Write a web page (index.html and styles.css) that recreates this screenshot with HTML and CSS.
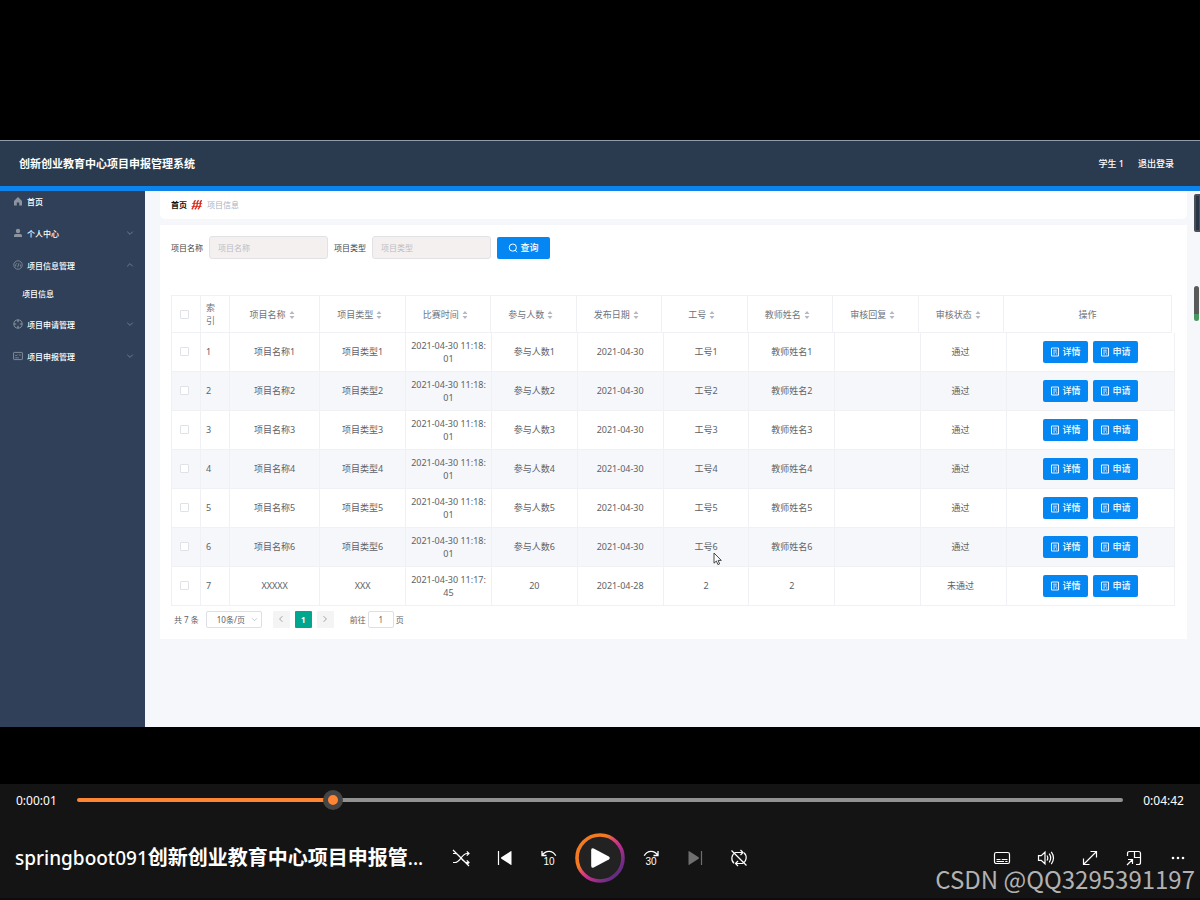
FILE: index.html
```
<!DOCTYPE html>
<html lang="zh-CN">
<head>
<meta charset="utf-8">
<meta name="viewport" content="width=device-width, initial-scale=1">
<title>springboot091创新创业教育中心项目申报管理系统</title>
<link rel="stylesheet" href="styles.css">
</head>
<body>
<svg class="sprite" aria-hidden="true">
  <symbol id="sort" viewBox="0 0 6 10"><path d="M0.5 4L3 1l2.5 3zM0.5 6L3 9l2.5-3z" fill="#b4b8c0"/></symbol>
  <symbol id="doc" viewBox="0 0 10 10"><path d="M1.500 1h7v8h-7z" fill="none" stroke="#fff" stroke-width=".9"/><path d="M3.200 3.200h3.600M3.200 5h3.600M3.200 6.900h1.800M6 6.900h1.200" stroke="#fff" stroke-width=".8"/></symbol>
  <symbol id="down" viewBox="0 0 8 8"><path d="M1.2 2.6L4 5.4l2.8-2.8" fill="none" stroke="currentColor" stroke-width=".9"/></symbol>
</svg>

<div class="stage">
  <div class="app">
    <header class="topbar">
      <h1 class="brand">创新创业教育中心项目申报管理系统</h1>
      <div class="account"><span>学生 1</span><a href="#">退出登录</a></div>
    </header>
    <div class="workspace">
      <nav class="sidebar">
        <a class="nav-item nav-home" href="#"><svg class="nav-icon" viewBox="0 0 10 10"><path d="M5 1L1 5v4.5h2.8V6.4h2.4v3.1H9V5z" fill="#8b949f"/></svg><span>首页</span></a>
        <a class="nav-item" href="#"><svg class="nav-icon" viewBox="0 0 10 10"><circle cx="5" cy="3" r="2.2" fill="#8b949f"/><path d="M1 9V7.6Q1 6 2.6 6h4.8Q9 6 9 7.6V9z" fill="#8b949f"/></svg><span>个人中心</span><svg class="chevron"><use href="#down"/></svg></a>
        <a class="nav-item" href="#"><svg class="nav-icon" viewBox="0 0 10 10"><circle cx="5" cy="5" r="4.2" fill="none" stroke="#8b949f" stroke-width=".8"/><path d="M2.600 6.500Q2.400 4 4 3.200M4.700 7.200l1.300-4M7.400 4.500v2" fill="none" stroke="#8b949f" stroke-width=".8"/></svg><span>项目信息管理</span><svg class="chevron chevron-up"><use href="#down"/></svg></a>
        <a class="nav-sub" href="#">项目信息</a>
        <a class="nav-item" href="#"><svg class="nav-icon" viewBox="0 0 10 10"><circle cx="5" cy="5" r="4.1" fill="none" stroke="#8b949f" stroke-width=".9"/><path d="M5 .5v2.8M5 6.7v2.8M.5 5h2.8M6.7 5h2.8" stroke="#8b949f" stroke-width="1.2"/></svg><span>项目申请管理</span><svg class="chevron"><use href="#down"/></svg></a>
        <a class="nav-item" href="#"><svg class="nav-icon" viewBox="0 0 10 10"><rect x=".6" y="1.4" width="8.8" height="7.2" rx=".6" fill="none" stroke="#8b949f" stroke-width=".9"/><path d="M2.2 4l1 1 1.500-1.500M5.800 4h2M2.200 6.800h3.600" fill="none" stroke="#8b949f" stroke-width=".8"/></svg><span>项目申报管理</span><svg class="chevron"><use href="#down"/></svg></a>
      </nav>
      <main class="content">
        <div class="crumbs">
          <a href="#">首页</a>
          <svg class="crumb-mark" viewBox="0 0 12 10"><path d="M4.800.6Q2.900.8 3.100 3T2.500 6.600.8 9.400M7.900.6Q6 .8 6.200 3T5.600 6.600 3.900 9.400M11 .6Q9.100.8 9.300 3T8.700 6.600 7 9.400" fill="none" stroke="#d8281b" stroke-width="1.300"/><path d="M1.200 3.400h10M.6 6.400h10" stroke="#d8281b" stroke-width=".9"/></svg>
          <span>项目信息</span>
        </div>
        <section class="card">
          <form class="filters">
            <label for="name">项目名称</label>
            <input id="name" type="text" placeholder="项目名称">
            <label for="type">项目类型</label>
            <input id="type" type="text" placeholder="项目类型">
            <button class="btn btn-search" type="button"><svg class="btn-icon" viewBox="0 0 10 10"><circle cx="4.8" cy="4.6" r="3.6" fill="none" stroke="#fff"/><path d="M7.2 7.2l1.8 2" stroke="#fff"/></svg>查询</button>
          </form>

          <div class="grid-head">
            <table class="grid">
              <colgroup><col class="c-tick"><col class="c-tick"><col class="c-name"><col span="8" class="c-std"><col class="c-ops"></colgroup>
              <thead><tr>
                <th class="tick"><input type="checkbox" aria-label="全选"></th>
                <th class="idx">索引</th>
                <th>项目名称<svg class="sort"><use href="#sort"/></svg></th>
                <th>项目类型<svg class="sort"><use href="#sort"/></svg></th>
                <th>比赛时间<svg class="sort"><use href="#sort"/></svg></th>
                <th>参与人数<svg class="sort"><use href="#sort"/></svg></th>
                <th>发布日期<svg class="sort"><use href="#sort"/></svg></th>
                <th>工号<svg class="sort"><use href="#sort"/></svg></th>
                <th>教师姓名<svg class="sort"><use href="#sort"/></svg></th>
                <th>审核回复<svg class="sort"><use href="#sort"/></svg></th>
                <th>审核状态<svg class="sort"><use href="#sort"/></svg></th>
                <th>操作</th>
              </tr></thead>
            </table>
          </div>
          <table class="grid grid-body">
            <colgroup><col class="c-tick"><col class="c-tick"><col class="c-name"><col span="8" class="c-std"><col class="c-ops"></colgroup>
            <tbody>
              <tr><td class="tick"><input type="checkbox" aria-label="选择 1"></td><td class="idx">1</td><td>项目名称1</td><td>项目类型1</td><td>2021-04-30 11:18:<br>01</td><td>参与人数1</td><td>2021-04-30</td><td>工号1</td><td>教师姓名1</td><td></td><td class="state">通过</td><td><button class="btn" type="button"><svg class="btn-icon"><use href="#doc"/></svg>详情</button><button class="btn" type="button"><svg class="btn-icon"><use href="#doc"/></svg>申请</button></td></tr>
              <tr><td class="tick"><input type="checkbox" aria-label="选择 2"></td><td class="idx">2</td><td>项目名称2</td><td>项目类型2</td><td>2021-04-30 11:18:<br>01</td><td>参与人数2</td><td>2021-04-30</td><td>工号2</td><td>教师姓名2</td><td></td><td class="state">通过</td><td><button class="btn" type="button"><svg class="btn-icon"><use href="#doc"/></svg>详情</button><button class="btn" type="button"><svg class="btn-icon"><use href="#doc"/></svg>申请</button></td></tr>
              <tr><td class="tick"><input type="checkbox" aria-label="选择 3"></td><td class="idx">3</td><td>项目名称3</td><td>项目类型3</td><td>2021-04-30 11:18:<br>01</td><td>参与人数3</td><td>2021-04-30</td><td>工号3</td><td>教师姓名3</td><td></td><td class="state">通过</td><td><button class="btn" type="button"><svg class="btn-icon"><use href="#doc"/></svg>详情</button><button class="btn" type="button"><svg class="btn-icon"><use href="#doc"/></svg>申请</button></td></tr>
              <tr><td class="tick"><input type="checkbox" aria-label="选择 4"></td><td class="idx">4</td><td>项目名称4</td><td>项目类型4</td><td>2021-04-30 11:18:<br>01</td><td>参与人数4</td><td>2021-04-30</td><td>工号4</td><td>教师姓名4</td><td></td><td class="state">通过</td><td><button class="btn" type="button"><svg class="btn-icon"><use href="#doc"/></svg>详情</button><button class="btn" type="button"><svg class="btn-icon"><use href="#doc"/></svg>申请</button></td></tr>
              <tr><td class="tick"><input type="checkbox" aria-label="选择 5"></td><td class="idx">5</td><td>项目名称5</td><td>项目类型5</td><td>2021-04-30 11:18:<br>01</td><td>参与人数5</td><td>2021-04-30</td><td>工号5</td><td>教师姓名5</td><td></td><td class="state">通过</td><td><button class="btn" type="button"><svg class="btn-icon"><use href="#doc"/></svg>详情</button><button class="btn" type="button"><svg class="btn-icon"><use href="#doc"/></svg>申请</button></td></tr>
              <tr><td class="tick"><input type="checkbox" aria-label="选择 6"></td><td class="idx">6</td><td>项目名称6</td><td>项目类型6</td><td>2021-04-30 11:18:<br>01</td><td>参与人数6</td><td>2021-04-30</td><td class="pointed">工号6<svg class="pointer" viewBox="0 0 9 14"><path d="M1 1v10.2l2.4-2.2 1.5 3.6 1.7-.7-1.5-3.5H8.3z" fill="#fff" stroke="#333" stroke-width=".9"/></svg></td><td>教师姓名6</td><td></td><td class="state">通过</td><td><button class="btn" type="button"><svg class="btn-icon"><use href="#doc"/></svg>详情</button><button class="btn" type="button"><svg class="btn-icon"><use href="#doc"/></svg>申请</button></td></tr>
              <tr><td class="tick"><input type="checkbox" aria-label="选择 7"></td><td class="idx">7</td><td>XXXXX</td><td>XXX</td><td>2021-04-30 11:17:<br>45</td><td>20</td><td>2021-04-28</td><td>2</td><td>2</td><td></td><td class="state">未通过</td><td><button class="btn" type="button"><svg class="btn-icon"><use href="#doc"/></svg>详情</button><button class="btn" type="button"><svg class="btn-icon"><use href="#doc"/></svg>申请</button></td></tr>
            </tbody>
          </table>

          <div class="pager">
            <span>共 7 条</span>
            <span class="size"><select aria-label="每页条数"><option>10条/页</option></select><svg class="size-arrow"><use href="#down"/></svg></span>
            <div class="pages">
              <button type="button" aria-label="上一页"><svg class="arrow arrow-prev"><use href="#down"/></svg></button>
              <button type="button" class="current">1</button>
              <button type="button" aria-label="下一页"><svg class="arrow arrow-next"><use href="#down"/></svg></button>
            </div>
            <label class="jump">前往<input type="text" value="1">页</label>
          </div>
        </section>
        <div class="scroll scroll-top"></div>
        <div class="scroll scroll-mid"></div>
      </main>
    </div>
  </div>
</div>

<footer class="player">
  <div class="timeline">
    <span>0:00:01</span>
    <input type="range" min="0" max="100" value="24" aria-label="进度">
    <span class="total">0:04:42</span>
  </div>
  <div class="controls">
    <div class="now">springboot091<b>创新创业教育中心项目申报管</b>...</div>
    <div class="transport">
      <button type="button" aria-label="随机播放"><svg class="ico" viewBox="0 0 18 18"><path d="M1 13.500h2c2.500 0 4-2 6-4.500s3.500-4.500 6-4.500h2M1 4.500h2c2.500 0 4 2 6 4.500s3.500 4.500 6 4.500h2M14.800 2.300L17 4.500l-2.200 2.200M14.800 11.300L17 13.500l-2.200 2.200M1 1l16 16" fill="none" stroke="#fff" stroke-width="1.200"/></svg></button>
      <button type="button" aria-label="上一个"><svg class="ico" viewBox="0 0 18 18"><path d="M2.500 2v14" stroke="#fff" stroke-width="1.200"/><path d="M15.500 2.600v12.800q0 .9-.8.400L5.400 9.700q-.8-.7 0-1.400l9.300-6.100q.8-.5.8.4z" fill="#fff"/></svg></button>
      <button type="button" class="skip" aria-label="后退 10 秒"><svg viewBox="0 0 18 7"><path d="M2 1v4.500h4.500M2.300 5.200C5.500.2 12.500-.2 15.800 5.800" fill="none" stroke="#fff" stroke-width="1.300"/></svg><span>10</span></button>
      <button type="button" class="play" aria-label="播放"><svg viewBox="0 0 50 50"><defs><linearGradient id="ring" x1="0.100" y1="0.150" x2="0.850" y2="0.850"><stop offset=".3" stop-color="#f37a20"/><stop offset=".45" stop-color="#de4870"/><stop offset=".62" stop-color="#bd2f8d"/><stop offset="1" stop-color="#642c83"/></linearGradient></defs><circle cx="25" cy="25" r="23" fill="#222" stroke="url(#ring)" stroke-width="3.600"/><path d="M16.200 17.200v15.600q0 2.800 2.500 1.600L33.800 26.500q1.900-1.500 0-3L18.700 15.600q-2.500-1.200-2.500 1.600z" fill="#fff"/></svg></button>
      <button type="button" class="skip" aria-label="前进 30 秒"><svg viewBox="0 0 18 7"><path d="M16 1v4.500h-4.500M15.700 5.200C12.500.2 5.500-.2 2.200 5.800" fill="none" stroke="#fff" stroke-width="1.300"/></svg><span>30</span></button>
      <button type="button" aria-label="下一个"><svg class="ico" viewBox="0 0 18 18"><path d="M15.500 2v14" stroke="#6f6f6f" stroke-width="1.200"/><path d="M2.500 2.600v12.800q0 .9.8.4l9.300-6.100q.8-.7 0-1.400L3.300 2.200q-.8-.5-.8.4z" fill="#6f6f6f"/></svg></button>
      <button type="button" aria-label="循环"><svg class="ico" viewBox="0 0 18 18"><path d="M4 14.300A6.600 6.600 0 0 1 5.500 3.500H13M10.500 1L13 3.500 10.500 6M14 3.700A6.600 6.600 0 0 1 12.500 14.500H5.500M8 12l-2.500 2.500L8 17M1.500 1.500l15 15" fill="none" stroke="#fff" stroke-width="1.200"/></svg></button>
    </div>
    <div class="extras">
      <button type="button" aria-label="字幕"><svg class="ico" viewBox="0 0 18 18"><rect x="1.500" y="3.500" width="15" height="11" rx="1.800" fill="none" stroke="#fff" stroke-width="1.200"/><path d="M3.500 10.500h4M8.700 10.500h5.800M3.500 12.500h7.500M12.200 12.500h2.300" stroke="#fff"/></svg></button>
      <button type="button" aria-label="音量"><svg class="ico" viewBox="0 0 18 18"><path d="M1.500 6.700h2.700L8 3.200v11.600l-3.800-3.500H1.500zM10 6.500q1.600 2.500 0 5M12.200 4.700q3 4.300 0 8.600M14.300 2.800q4.400 6.200 0 12.400" fill="none" stroke="#fff" stroke-width="1.200"/></svg></button>
      <button type="button" aria-label="全屏"><svg class="ico" viewBox="0 0 18 18"><path d="M2.500 15.500l13-13M9.500 2.500h6v6M2.500 9.500v6h6" fill="none" stroke="#fff" stroke-width="1.200"/></svg></button>
      <button type="button" aria-label="迷你播放器"><svg class="ico" viewBox="0 0 18 18"><path d="M2.500 7V4.500q0-2 2-2h9q2 0 2 2v9q0 2-2 2H11M9.500 2.500v6h6M2 16l5.500-5.500M3 10.500h4.500V15" fill="none" stroke="#fff" stroke-width="1.200"/></svg></button>
      <button type="button" aria-label="更多"><svg class="ico" viewBox="0 0 18 18"><circle cx="4" cy="9" r="1.300" fill="#fff"/><circle cx="9" cy="9" r="1.300" fill="#fff"/><circle cx="14" cy="9" r="1.300" fill="#fff"/></svg></button>
    </div>
  </div>
  <div class="watermark">CSDN @QQ3295391197</div>
</footer>
</body>
</html>
```
FILE: styles.css
```
* { box-sizing: border-box; }
body {
  margin: 0;
  min-height: 100vh;
  display: flex;
  flex-direction: column;
  background: #000;
  font-family: "Noto Sans", "Noto Sans CJK SC", sans-serif;
  font-size: 8px;
  line-height: 13px;
  color: #606266;
}
a { color: inherit; text-decoration: none; }
button, input, select { font: inherit; color: inherit; margin: 0; padding: 0; }
button { border: 0; background: none; }
svg { display: block; }
.sprite { position: absolute; width: 0; height: 0; }

.stage { flex: 1; display: flex; padding: 140px 0 57px; }
.app { flex: 1; min-width: 0; display: flex; flex-direction: column; background: #f6f7fa; }

.topbar {
  display: flex;
  justify-content: space-between;
  align-items: center;
  height: 51px;
  padding: 0 26px 0 19px;
  background: #2b3b4f;
  border-top: 1px solid #8e9cab;
  border-bottom: 5px solid #0d84ec;
  color: #fff;
}
.brand { margin: 0; font-size: 11px; font-weight: 700; }
.account { display: flex; gap: 14px; font-size: 9px; font-weight: 500; }

.workspace { flex: 1; display: flex; }
.sidebar { width: 145px; background: #2f4058; color: #fff; font-weight: 500; }
.nav-item { display: flex; align-items: center; gap: 4px; height: 32px; padding: 0 11px 2px 13px; }
.nav-home { height: 22px; margin-bottom: 5px; }
.nav-icon { width: 10px; height: 10px; }
.nav-sub { display: flex; align-items: center; height: 27px; padding: 0 0 4px 22px; }
.chevron { width: 8px; height: 8px; margin-left: auto; color: #77828f; }
.chevron-up { transform: rotate(180deg); }

.content { position: relative; flex: 1; min-width: 0; padding: 0 13px 0 15px; }
.crumbs {
  display: flex;
  align-items: center;
  gap: 4px;
  height: 28px;
  padding: 0 11px 1px;
  background: #fff;
  border-radius: 0 0 5px 5px;
  color: #a9b4c2;
}
.crumbs a { color: #111; font-weight: 700; }
.crumb-mark { width: 12px; height: 10px; }

.card { margin-top: 6px; padding: 11px 12px 11px 11px; background: #fff; }
.filters { display: flex; align-items: center; gap: 6px; margin-bottom: 36px; color: #444; }
.filters input {
  width: 119px;
  height: 23px;
  padding: 0 8px 1px;
  background: #f5f0f0;
  border: 1px solid #e2e2e5;
  border-radius: 3px;
}
.filters input::placeholder { color: #b9bdc5; }
.btn {
  display: inline-flex;
  align-items: center;
  justify-content: center;
  gap: 2px;
  width: 45px;
  height: 22px;
  background: #0486f3;
  border-radius: 2px;
  color: #fff;
  font-size: 9px;
  font-weight: 500;
  vertical-align: middle;
}
.btn + .btn { margin-left: 5px; }
.btn-search { width: 53px; }
.btn-icon { width: 10px; height: 10px; }

.grid-head { padding-right: 3px; }
.grid {
  width: 100%;
  table-layout: fixed;
  border-collapse: collapse;
  font-size: 9px;
}
.grid th, .grid td { padding: 0; border: 1px solid #eff1f5; text-align: center; font-weight: 400; }
.grid th { height: 37px; padding-right: 5px; color: #70747b; }
.grid th:last-child { padding-right: 0; }
.grid td { height: 39px; }
.grid-body tr:first-child td { height: 38px; border-top: 0; }
.grid-body tr:nth-child(even) { background: #f5f7fb; }
.grid .idx { padding: 0 6px 0 5px; text-align: left; }
.grid .tick { padding-right: 3px; }
.grid .state { padding-right: 6px; }
.c-tick { width: 29px; }
.c-name { width: 9%; }
.c-std { width: auto; }
.c-ops { width: 168px; }
.sort { display: inline-block; width: 6px; height: 10px; margin-left: 3px; vertical-align: middle; }
input[type="checkbox"] {
  appearance: none;
  display: block;
  width: 9px;
  height: 9px;
  margin: 0 auto;
  background: #fff;
  border: 1px solid #dfe2e8;
  border-radius: 1px;
}
.pointed { position: relative; }
.pointer { position: absolute; left: 49px; top: 24px; width: 9px; height: 14px; }

.pager { display: flex; align-items: center; margin-top: 5px; padding-left: 3px; }
.size { position: relative; margin: 0 11px 0 7px; }
.size select {
  appearance: none;
  display: block;
  width: 56px;
  height: 17px;
  padding: 0 10px;
  border: 1px solid #dcdfe6;
  border-radius: 2px;
  background: #fff;
}
.size-arrow { position: absolute; right: 4px; top: 5px; width: 7px; height: 7px; color: #b4b8c0; }
.pages { display: flex; gap: 5px; }
.pages button { display: grid; place-items: center; width: 17px; height: 17px; background: #f4f4f5; border-radius: 1px; color: #999; }
.pages .current { background: #00a78e; color: #fff; font-weight: 700; }
.arrow { width: 8px; height: 8px; }
.arrow-prev { transform: rotate(90deg); }
.arrow-next { transform: rotate(-90deg); }
.jump { display: flex; align-items: center; gap: 2px; margin-left: 16px; }
.jump input { width: 26px; height: 17px; border: 1px solid #dcdfe6; border-radius: 2px; text-align: center; }

.scroll { position: absolute; right: 0; }
.scroll-top { top: 3px; width: 6px; height: 38px; border: 2px solid #4b5058; border-right-width: 1px; border-radius: 2px 0 0 2px; background: #263445; }
.scroll-mid { top: 95px; right: 1px; width: 5px; height: 35px; border-radius: 3px; background: linear-gradient(#5a5a5a 80%, #4b9560 80%); }

.player { position: relative; background: #141414; color: #fff; padding-bottom: 15px; border-bottom: 2px solid #0f0a10; }
.timeline { display: flex; align-items: center; height: 32px; padding: 0 16px; font-size: 12px; }
.timeline span { width: 61px; }
.timeline .total { text-align: right; }
.timeline input { appearance: none; flex: 1; min-width: 0; height: 20px; background: none; }
.timeline input::-webkit-slider-runnable-track {
  height: 4px;
  border-radius: 2px;
  background: linear-gradient(90deg, #ff8534 24%, #929292 24%);
}
.timeline input::-webkit-slider-thumb {
  appearance: none;
  width: 20px;
  height: 20px;
  margin-top: -8px;
  border-radius: 50%;
  border: 5px solid #454545;
  background: #ff8534;
}
.controls { display: grid; grid-template-columns: 1fr auto 1fr; align-items: center; margin-top: 17px; }
.now { min-width: 0; padding-left: 15px; overflow: hidden; white-space: nowrap; font-size: 19px; line-height: 30px; font-weight: 500; }
.now b { font-size: 20px; }
.transport, .extras { display: flex; align-items: center; }
.extras { justify-content: flex-end; }
.controls button { display: flex; flex-direction: column; align-items: center; justify-content: center; width: 44px; height: 50px; }
.controls .play { width: 58px; }
.play svg { width: 50px; height: 50px; }
.ico { width: 18px; height: 18px; }
.skip svg { width: 18px; height: 7px; }
.skip span { font-family: "Liberation Sans", sans-serif; font-size: 10px; line-height: 9px; font-weight: 500; }
.watermark {
  position: absolute;
  right: 5px;
  bottom: 1px;
  font-family: "Noto Sans CJK SC", sans-serif;
  font-size: 24px;
  line-height: 36px;
  color: #b2b2b2;
}
```
